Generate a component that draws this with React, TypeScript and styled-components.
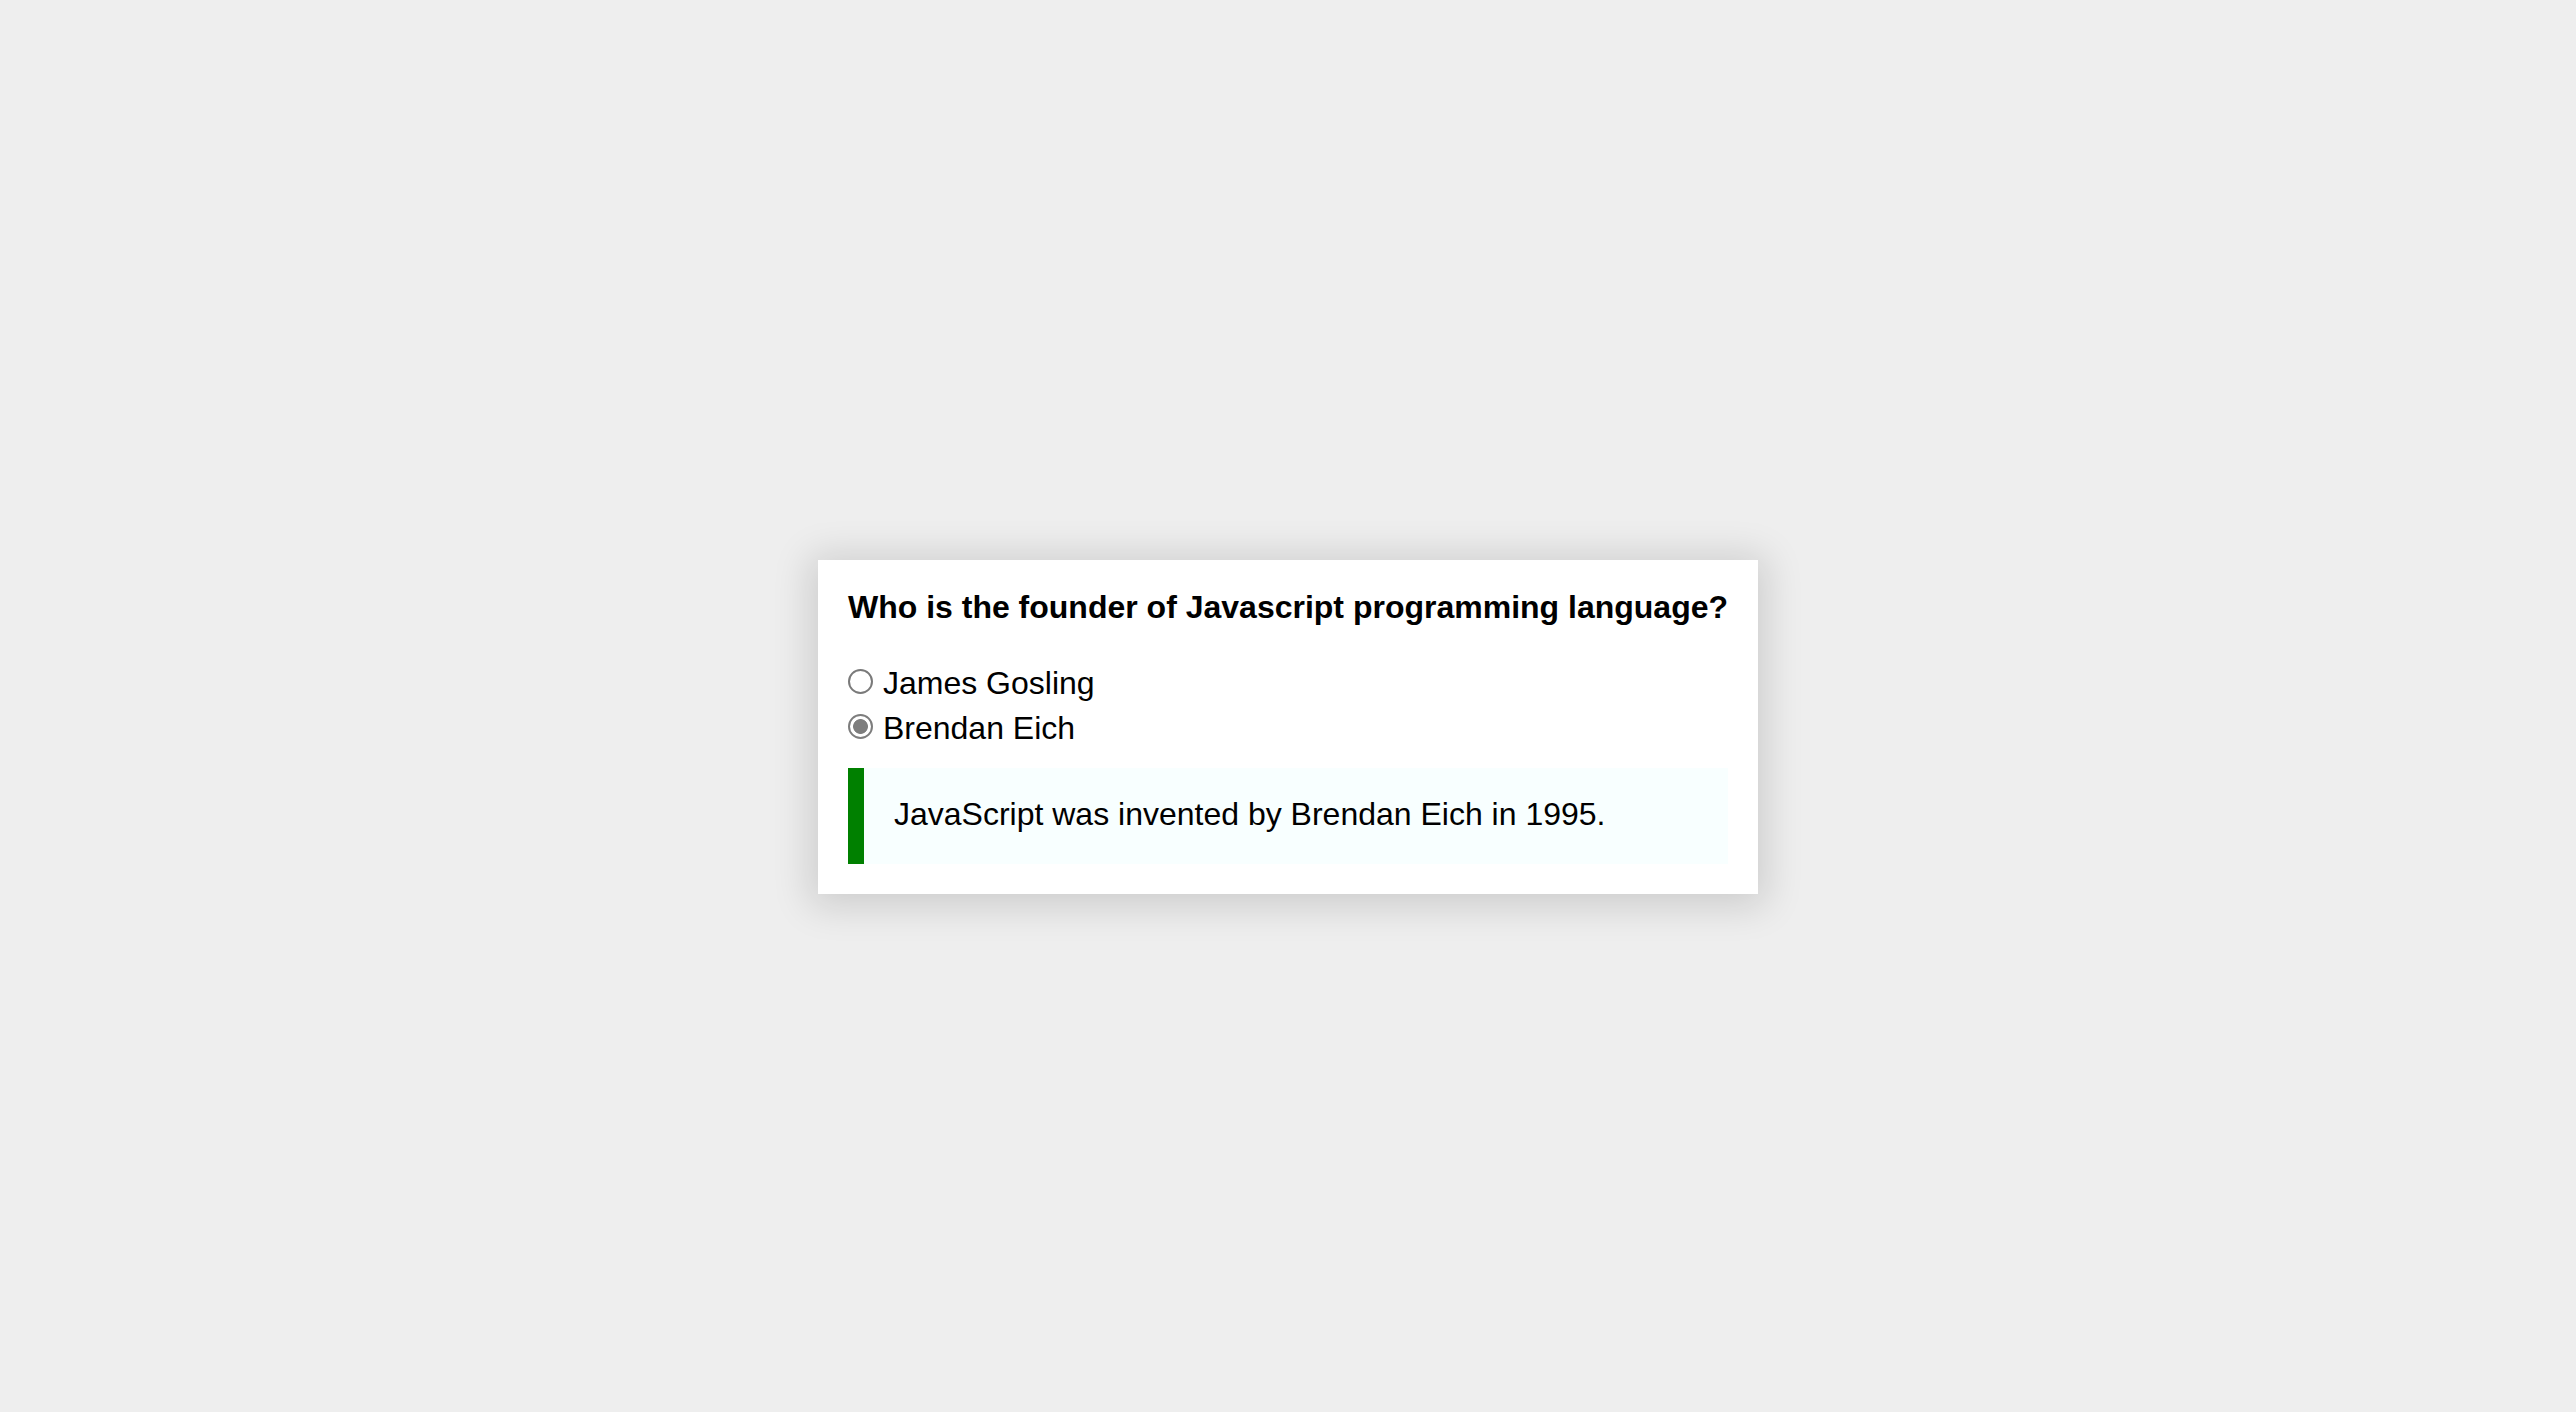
import React, { useState } from "react";
import styled, { createGlobalStyle } from "styled-components";

const GlobalStyle = createGlobalStyle`
  html, body {
    margin: 0;
    padding: 0;
    background: #eeeeee;
  }
  body {
    font-family: "Liberation Sans", Arial, Helvetica, sans-serif;
    color: #000;
  }
`;

const Page = styled.div`
  min-height: 100vh;
  box-sizing: border-box;
  padding-top: 42px;
  display: flex;
  justify-content: center;
  align-items: center;
`;

const Card = styled.div`
  width: max-content;
  background: #ffffff;
  padding: 29px 30px 30px;
  box-shadow: 0 4px 36px 8px rgba(0, 0, 0, 0.14);
`;

const Question = styled.div`
  font-size: 32px;
  font-weight: bold;
  line-height: normal;
  white-space: nowrap;
  margin-bottom: 35px;
`;

const Options = styled.div`
  display: flex;
  flex-direction: column;
  margin-bottom: 17px;
`;

const OptionLabel = styled.label`
  display: block;
  font-size: 32px;
  line-height: 44.8px;
  white-space: nowrap;
`;

const Radio = styled.input`
  appearance: none;
  -webkit-appearance: none;
  box-sizing: border-box;
  display: inline-block;
  vertical-align: baseline;
  width: 25px;
  height: 25px;
  margin: 0 10px 0 0;
  border: 2px solid #7a7a7a;
  border-radius: 50%;
  background: #ffffff;

  &:checked {
    border-color: #7d7d7d;
    background: radial-gradient(circle, #7d7d7d 0 7px, #ffffff 7.8px);
  }
`;

const Explanation = styled.div`
  display: flex;
  background: #f8ffff;
`;

const Bar = styled.div<{ $color: string }>`
  flex: 0 0 16px;
  background: ${(p) => p.$color};
`;

const ExplanationText = styled.p`
  margin: 0;
  padding: 28px 32px 31px 30px;
  font-size: 32px;
  line-height: normal;
`;

const options = ["James Gosling", "Brendan Eich"];

export default function App() {
  const [selected] = useState("Brendan Eich");
  return (
    <>
      <GlobalStyle />
      <Page>
        <Card>
          <Question>Who is the founder of Javascript programming language?</Question>
          <Options>
            {options.map((o) => (
              <OptionLabel key={o}>
                <Radio type="radio" name="q" checked={selected === o} disabled readOnly />
                {o}
              </OptionLabel>
            ))}
          </Options>
          <Explanation>
            <Bar $color="#008000" />
            <ExplanationText>JavaScript was invented by Brendan Eich in 1995.</ExplanationText>
          </Explanation>
        </Card>
      </Page>
    </>
  );
}
